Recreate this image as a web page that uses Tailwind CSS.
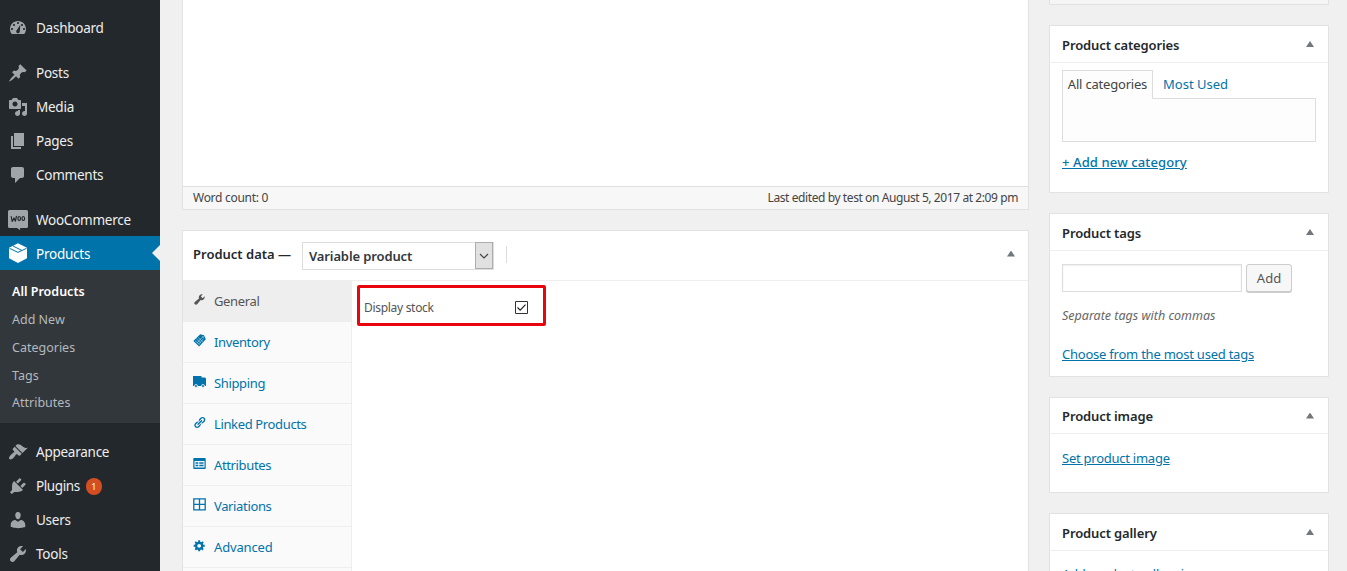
<!DOCTYPE html>
<html lang="en">
<head>
<meta charset="utf-8">
<title>Edit product</title>
<script src="https://cdn.jsdelivr.net/npm/@tailwindcss/browser@4"></script>
</head>
<body class="w-[1347px] h-[571px] overflow-hidden bg-[#f0f0f0] font-['Noto_Sans','Open_Sans',sans-serif] text-[13px] text-[#444] flex">

<!-- Admin menu -->
<nav class="w-[160px] h-[571px] shrink-0 bg-[#23282d] text-[#eee] text-[13.5px] tracking-[-0.25px] flex flex-col pt-[11px] overflow-hidden">
  <a class="h-[34px] mb-[11px] shrink-0 flex items-center gap-[8px] pl-2"><svg class="size-5 fill-[#a0a5aa]" viewBox="0 0 20 20"><path fill-rule="evenodd" d="M3.76 16h12.48c1.1-1.37 1.76-3.11 1.76-5 0-4.42-3.58-8-8-8s-8 3.58-8 8c0 1.89.66 3.63 1.76 5zM10 4c.55 0 1 .45 1 1s-.45 1-1 1-1-.45-1-1 .45-1 1-1zM6 6c.55 0 1 .45 1 1s-.45 1-1 1-1-.45-1-1 .45-1 1-1zM14 6c.55 0 1 .45 1 1s-.45 1-1 1-1-.45-1-1 .45-1 1-1zM4 10c.55 0 1 .45 1 1s-.45 1-1 1-1-.45-1-1 .45-1 1-1zM16 10c.55 0 1 .45 1 1s-.45 1-1 1-1-.45-1-1 .45-1 1-1zM12.300 6.800l-.5 6.700c0 1-.8 1.800-1.800 1.800s-1.800-.8-1.800-1.800c0-.6.300-1.100.700-1.400z"/></svg><span>Dashboard</span></a>
  <a class="h-[34px] shrink-0 flex items-center gap-[8px] pl-2"><svg class="size-5 fill-[#a0a5aa]" viewBox="0 0 20 20"><path d="M10.44 3.02l1.82-1.82 6.36 6.35-1.83 1.82c-1.05-.68-2.48-.57-3.41.36l-.75.75c-.92.93-1.04 2.35-.35 3.41l-1.83 1.82-2.41-2.41-2.8 2.79c-.42.42-3.38 2.71-3.8 2.29s1.86-3.39 2.28-3.81l2.79-2.79L4.1 9.36l1.83-1.82c1.05.69 2.48.57 3.4-.36l.75-.75c.93-.92 1.05-2.35.36-3.41z"/></svg><span>Posts</span></a>
  <a class="h-[34px] shrink-0 flex items-center gap-[8px] pl-2"><svg class="size-5 fill-[#a0a5aa]" viewBox="0 0 20 20"><path d="M13 11V4c0-.55-.45-1-1-1h-1.67L9 1H5L3.67 3H2c-.55 0-1 .45-1 1v7c0 .55.45 1 1 1h10c.55 0 1-.45 1-1zM7 4.5c1.38 0 2.5 1.12 2.5 2.5S8.38 9.5 7 9.5 4.5 8.38 4.5 7 5.62 4.5 7 4.5zM14 6h5v10.5c0 1.38-1.12 2.5-2.5 2.5S14 17.88 14 16.5s1.12-2.5 2.5-2.5c.17 0 .34.02.5.05V9h-3V6zm-4 8.05V13h2v3.5c0 1.38-1.12 2.5-2.5 2.5S7 17.88 7 16.5 8.12 14 9.5 14c.17 0 .34.02.5.05z" fill-rule="evenodd"/></svg><span>Media</span></a>
  <a class="h-[34px] shrink-0 flex items-center gap-[8px] pl-2"><svg class="size-5 fill-[#a0a5aa]" viewBox="0 0 20 20"><path d="M6 15V2h10v13H6zm-1 1h8v2H3V5h2v11z"/></svg><span>Pages</span></a>
  <a class="h-[34px] mb-[11px] shrink-0 flex items-center gap-[8px] pl-2"><svg class="size-5 fill-[#a0a5aa]" viewBox="0 0 20 20"><path d="M5 2h9c1.1 0 2 .9 2 2v7c0 1.1-.9 2-2 2h-2l-5 5v-5H5c-1.100 0-2-.9-2-2V4c0-1.100.9-2 2-2z"/></svg><span>Comments</span></a>
  <a class="h-[33px] shrink-0 flex items-center gap-[8px] pl-2"><svg class="size-5" viewBox="0 0 20 20"><path fill="#a0a5aa" d="M1.500 0h17A1.500 1.500 0 0 1 20 1.500v15a1.500 1.500 0 0 1-1.500 1.500H12l.3 2.200L9 18H1.500A1.500 1.500 0 0 1 0 16.500v-15A1.500 1.500 0 0 1 1.500 0z"/><g fill="none" stroke="#23282d" stroke-width="1.200" stroke-linecap="round" stroke-linejoin="round"><path d="M3.200 6.500l1 5 1.800-3.500 1.400 3.200 1-4.900"/><ellipse cx="11.200" cy="8.500" rx="1.300" ry="2"/><ellipse cx="15.300" cy="8.500" rx="1.300" ry="2"/></g></svg><span class="pt-[2px]">WooCommerce</span></a>
  <a class="h-[34px] shrink-0 flex items-center gap-[8px] pl-2 bg-[#0073aa] text-white"><svg class="size-5" viewBox="0 0 20 20"><path fill="#fff" d="M10 .2l9 4.600v10.400l-9 4.800-9-4.800V4.800z"/><path fill="none" stroke="#0073aa" stroke-width="1" d="M1.500 5.300L10 9.400l8.500-4.100M5 3l9 4.500"/></svg><span class="grow pt-[2px]">Products</span><i class="w-2 h-4 bg-[#f0f0f0] [clip-path:polygon(100%_0,0_50%,100%_100%)]"></i></a>
  <div class="h-[153px] mb-[12px] shrink-0 bg-[#32373c] text-[#b4b9be] text-[12.5px] tracking-normal pl-3 pt-[9px] flex flex-col">
    <a class="h-[27.700px] shrink-0 flex items-center font-semibold text-white">All Products</a>
    <a class="h-[27.700px] shrink-0 flex items-center">Add New</a>
    <a class="h-[27.700px] shrink-0 flex items-center">Categories</a>
    <a class="h-[27.700px] shrink-0 flex items-center">Tags</a>
    <a class="h-[27.700px] shrink-0 flex items-center">Attributes</a>
  </div>
  <a class="h-[34px] shrink-0 flex items-center gap-[8px] pl-2"><svg class="size-5 fill-[#a0a5aa]" viewBox="0 0 20 20"><path d="M14.48 11.06L7.41 3.99l1.5-1.5c.5-.56 2.3-.47 3.51.32 1.21.8 1.43 1.28 2.91 2.1 1.18.64 2.45 1.26 4.45.85zm-.71.71L6.7 4.7 4.93 6.47c-.39.39-.39 1.02 0 1.41l1.06 1.06c.39.39.39 1.03 0 1.42-.6.6-1.43 1.11-2.21 1.69-.35.26-.7.53-1.01.84C1.43 14.23.4 16.08 1.4 17.07c.99 1 2.84-.03 4.18-1.36.31-.31.58-.66.85-1.02.57-.78 1.08-1.61 1.69-2.21.39-.39 1.02-.39 1.41 0l1.06 1.06c.39.39 1.02.39 1.41 0z"/></svg><span>Appearance</span></a>
  <a class="h-[34px] shrink-0 flex items-center gap-[8px] pl-2"><svg class="size-5 fill-[#a0a5aa]" viewBox="0 0 20 20"><path d="M13.11 4.36L9.87 7.6 8 5.73l3.24-3.24c.35-.34 1.05-.2 1.56.32.52.51.66 1.21.31 1.55zm-8 1.77l.91-1.12 9.01 9.01-1.19.84c-.71.71-2.63 1.16-3.82 1.16H6.14L4.9 17.26c-.59.59-1.54.59-2.12 0-.59-.58-.59-1.53 0-2.12l1.24-1.24v-3.88c0-1.13.4-3.19 1.09-3.89zm7.26 3.97l3.24-3.24c.34-.35 1.04-.21 1.55.31.52.51.66 1.21.31 1.55l-3.24 3.25z"/></svg><span class="tracking-[-0.4px]">Plugins</span><span class="-ml-[2px] w-4 h-[17px] rounded-full bg-[#d54e21] text-white text-[9px] leading-[17px] text-center">1</span></a>
  <a class="h-[34px] shrink-0 flex items-center gap-[8px] pl-2"><svg class="size-5 fill-[#a0a5aa]" viewBox="0 0 20 20"><path d="M10 9.25c-2.27 0-2.73-3.44-2.73-3.44C7 4.02 7.82 2 9.97 2c2.16 0 2.98 2.02 2.71 3.81 0 0-.41 3.44-2.68 3.44zm0 2.57L12.72 10c2.39 0 4.52 2.33 4.52 4.53v2.49s-3.65 1.13-7.24 1.13c-3.65 0-7.24-1.13-7.24-1.13v-2.49c0-2.25 1.94-4.48 4.47-4.48z"/></svg><span>Users</span></a>
  <a class="h-[34px] shrink-0 flex items-center gap-[8px] pl-2"><svg class="size-5 fill-[#a0a5aa]" viewBox="0 0 20 20"><path d="M16.68 9.77c-1.34 1.34-3.3 1.67-4.95.99l-5.41 6.52c-.99.99-2.59.99-3.58 0s-.99-2.59 0-3.57l6.52-5.42c-.68-1.65-.35-3.61.99-4.95 1.28-1.28 3.12-1.62 4.72-1.06l-2.89 2.89 2.82 2.82 2.86-2.87c.53 1.58.18 3.39-1.08 4.65z"/></svg><span>Tools</span></a>
</nav>

<!-- Main column -->
<main class="ml-[22px] w-[847px] h-[571px] overflow-hidden shrink-0 flex flex-col">
  <section class="h-[210px] shrink-0 bg-white border border-t-0 border-[#e2e2e2] flex flex-col">
    <div class="grow"></div>
    <div class="h-[23px] bg-[#f7f7f7] border-t border-[#dedede] px-[10px] flex items-center justify-between text-[12px]"><span class="tracking-[-0.28px]">Word count: 0</span><span class="tracking-[-0.41px]">Last edited by test on August 5, 2017 at 2:09 pm</span></div>
  </section>
  <section class="mt-[20px] h-[400px] shrink-0 bg-white border border-[#e2e2e2] flex flex-col">
    <header class="h-[50px] shrink-0 border-b border-[#eee] pl-[10px] pr-[13px] flex items-center text-[#23282d] font-semibold">
      <h2 class="w-[109px] -mt-[2px] whitespace-nowrap">Product data —</h2>
      <div class="w-[192px] h-[28px] border border-[#ddd] flex justify-between items-center pl-[6px]"><span class="text-[#32373c] tracking-[-0.12px] pt-[3px]">Variable product</span><span class="w-[18px] h-[27px] border border-[#adadad] bg-[#e1e1e1] flex items-center justify-center"><svg class="w-[10px] h-[6px]" viewBox="0 0 10 6"><path d="M1 1l4 4 4-4" fill="none" stroke="#444" stroke-width="1.200"/></svg></span></div>
      <i class="ml-[12px] -mt-[2px] w-px h-[17px] bg-[#ddd] mr-auto"></i>
      <i class="w-[8px] h-[6px] -mt-[4px] bg-[#72777c] [clip-path:polygon(50%_0,100%_100%,0_100%)]"></i>
    </header>
    <div class="grow flex">
      <ul class="w-[169px] shrink-0 border-r border-[#eee] bg-[#fafafa] text-[#0073aa] tracking-[-0.36px]">
        <li class="h-[41px] border-b border-[#eee] bg-[#eee] text-[#555] flex items-center gap-[8px] pl-[10px]"><svg class="size-[13px] -mt-[4px] fill-current" viewBox="0 0 20 20"><path d="M16.68 9.77c-1.34 1.34-3.3 1.67-4.95.99l-5.41 6.52c-.99.99-2.59.99-3.58 0s-.99-2.59 0-3.57l6.52-5.42c-.68-1.65-.35-3.61.99-4.95 1.28-1.28 3.12-1.62 4.72-1.06l-2.89 2.89 2.82 2.82 2.86-2.87c.53 1.58.18 3.39-1.08 4.65z"/></svg><span class="pt-[2px]">General</span></li>
        <li class="h-[41px] border-b border-[#eee] flex items-center gap-[8px] pl-[10px]"><svg class="size-[13px] -mt-[4px]" viewBox="0 0 13 13"><path fill="currentColor" d="M7.200.3L11 1.300l1.800 3.900-6.600 7.300L.3 7z"/><g fill="none" stroke="#fafafa" stroke-width=".45"><path d="M2 6.600l4.700 4.200M3.500 5l4.700 4.200M5 3.500l4.700 4.200M4 9l5-5.600M5.600 10.200l5-5.600"/></g><circle cx="10" cy="2.900" r=".7" fill="#fafafa"/></svg><span class="pt-[2px]">Inventory</span></li>
        <li class="h-[41px] border-b border-[#eee] flex items-center gap-[8px] pl-[10px]"><svg class="size-[13px] -mt-[4px]" viewBox="0 0 13 13"><path fill="currentColor" d="M0 1h8.500v1.500H12l1 1v7.500H0z"/><g fill="currentColor" stroke="#fafafa" stroke-width=".8"><circle cx="3" cy="11" r="1.500"/><circle cx="10" cy="11" r="1.500"/></g></svg><span class="pt-[2px]">Shipping</span></li>
        <li class="h-[41px] border-b border-[#eee] flex items-center gap-[8px] pl-[10px]"><svg class="size-[13px] -mt-[4px] fill-current" viewBox="0 0 20 20"><path d="M17.74 2.76c1.68 1.69 1.68 4.41 0 6.1l-1.53 1.52c-1.12 1.12-2.7 1.47-4.14 1.09l2.62-2.61.76-.77.76-.76c.84-.84.84-2.2 0-3.04-.84-.85-2.2-.85-3.04 0l-.77.76-3.38 3.38c-.37-1.44-.02-3.02 1.1-4.14l1.52-1.53c1.69-1.68 4.42-1.68 6.1 0zM8.59 13.43l5.34-5.34c.42-.42.42-1.1 0-1.52-.44-.43-1.13-.39-1.53 0l-5.33 5.34c-.42.42-.42 1.1 0 1.52.44.43 1.13.39 1.52 0zm-.76 2.29l4.14-4.15c.38 1.44.03 3.02-1.09 4.14l-1.52 1.53c-1.69 1.68-4.41 1.68-6.1 0-1.68-1.68-1.68-4.42 0-6.1l1.53-1.52c1.12-1.12 2.7-1.47 4.14-1.1l-4.14 4.15c-.85.84-.85 2.2 0 3.05.84.84 2.2.84 3.04 0z"/></svg><span class="pt-[2px]">Linked Products</span></li>
        <li class="h-[41px] border-b border-[#eee] flex items-center gap-[8px] pl-[10px]"><svg class="size-[13px] -mt-[4px]" viewBox="0 0 13 13"><path fill="currentColor" fill-rule="evenodd" d="M1 1h11a.7.7 0 0 1 .7.7v9.600a.7.7 0 0 1-.7.7H1a.7.7 0 0 1-.7-.7V1.700A.7.7 0 0 1 1 1zM1.500 4v6.500h10V4zM2.500 5.200h2.800v1.500H2.500zM2.500 7.800h2.800v1.500H2.500zM6.300 5.200h4.200v1.500H6.300zM6.300 7.800h4.200v1.500H6.300z"/></svg><span class="pt-[2px]">Attributes</span></li>
        <li class="h-[41px] border-b border-[#eee] flex items-center gap-[8px] pl-[10px]"><svg class="size-[13px] -mt-[4px]" viewBox="0 0 13 13"><path fill="none" stroke="currentColor" stroke-width="1.300" d="M.8.8h11.400v11H.8zM6.500 1v10.500M1 6.300h11"/></svg><span class="pt-[2px]">Variations</span></li>
        <li class="h-[41px] border-b border-[#eee] flex items-center gap-[8px] pl-[10px]"><svg class="size-[13px] -mt-[4px] fill-current" viewBox="0 0 20 20"><path fill-rule="evenodd" d="M18 12h-2.18c-.17.7-.44 1.35-.81 1.93l1.54 1.54-2.1 2.1-1.54-1.54c-.58.36-1.23.63-1.91.79V19H8v-2.18c-.68-.16-1.33-.43-1.91-.79l-1.54 1.54-2.12-2.12 1.54-1.54c-.36-.58-.63-1.23-.79-1.91H1V9.03h2.17c.16-.7.44-1.35.8-1.94L2.43 5.55l2.1-2.1 1.54 1.54c.58-.37 1.24-.64 1.93-.81V2h3v2.18c.68.16 1.33.43 1.91.79l1.54-1.54 2.12 2.12-1.54 1.54c.36.59.64 1.24.8 1.94H18V12zm-8.500 1.500c1.660 0 3-1.340 3-3s-1.340-3-3-3-3 1.340-3 3 1.340 3 3 3z"/></svg><span class="pt-[2px] tracking-[-0.15px]">Advanced</span></li>
      </ul>
      <div class="ml-[5px] mt-[4px] w-[189px] h-[41px] border-[3px] border-[#e8050e] rounded-[2px] flex items-center justify-between pl-[4px] pr-[15px] text-[12px] text-[#555]"><span class="tracking-[-0.3px] mt-[5px]">Display stock</span><svg class="size-[13px] mt-[3px]" viewBox="0 0 13 13"><path d="M.5.5h12v12H.5z" fill="#fff" stroke="#333"/><path d="M2.500 6.500l2.700 2.700 5.300-5.500" fill="none" stroke="#222" stroke-width="1.200"/></svg></div>
    </div>
  </section>
</main>

<!-- Side column -->
<aside class="ml-[20px] w-[280px] h-[571px] overflow-hidden shrink-0 flex flex-col">
  <div class="h-[5px] shrink-0 bg-[#f5f5f5] border border-t-0 border-[#e2e2e2]"></div>
  <section class="mt-[20px] h-[168px] shrink-0 bg-white border border-[#e2e2e2]">
    <header class="h-[37px] border-b border-[#eee] pl-[12px] pr-[14px] flex items-center justify-between text-[#23282d] font-semibold tracking-[-0.12px]"><h2 class="mt-[3px]">Product categories</h2><i class="w-[8px] h-[6px] bg-[#72777c] [clip-path:polygon(50%_0,100%_100%,0_100%)]"></i></header>
    <div class="px-[12px] pt-[7px]">
      <div class="flex h-[29px] -mb-px"><span class="w-[91px] border border-b-0 border-[#ddd] bg-[#fdfdfd] relative z-10 flex items-center justify-center tracking-[-0.2px]">All categories</span><span class="ml-[10px] flex items-center text-[#0073aa]">Most Used</span></div>
      <div class="w-[254px] h-[44px] border border-[#ddd] bg-[#fdfdfd]"></div>
      <a class="block mt-[11px] font-medium tracking-[0.12px] text-[#0073aa] underline">+ Add new category</a>
    </div>
  </section>
  <section class="mt-[20px] h-[164px] shrink-0 bg-white border border-[#e2e2e2]">
    <header class="h-[37px] border-b border-[#eee] pl-[12px] pr-[14px] flex items-center justify-between text-[#23282d] font-semibold tracking-[-0.12px]"><h2 class="mt-[3px]">Product tags</h2><i class="w-[8px] h-[6px] bg-[#72777c] [clip-path:polygon(50%_0,100%_100%,0_100%)]"></i></header>
    <div class="px-[12px] pt-[13px]">
      <div class="flex gap-[4px]"><span class="w-[180px] h-[28px] border border-[#ddd] bg-white shadow-[inset_0_1px_2px_rgba(0,0,0,0.07)]"></span><span class="w-[46px] h-[28px] pt-[2px] border border-[#ccc] rounded-[3px] bg-[#f7f7f7] shadow-[0_1px_0_#ccc] flex items-center justify-center text-[#555]">Add</span></div>
      <p class="mt-[14px] italic text-[12.500px] leading-[20px] text-[#666]">Separate tags with commas</p>
      <a class="block mt-[18px] leading-[20px] tracking-[-0.23px] text-[#0073aa] underline">Choose from the most used tags</a>
    </div>
  </section>
  <section class="mt-[20px] h-[96px] shrink-0 bg-white border border-[#e2e2e2]">
    <header class="h-[36px] border-b border-[#eee] pl-[12px] pr-[14px] flex items-center justify-between text-[#23282d] font-semibold tracking-[-0.12px]"><h2 class="mt-[3px]">Product image</h2><i class="w-[8px] h-[6px] bg-[#72777c] [clip-path:polygon(50%_0,100%_100%,0_100%)]"></i></header>
    <a class="block pl-[12px] pt-[14px] leading-[20px] tracking-[-0.25px] text-[#0073aa] underline">Set product image</a>
  </section>
  <section class="mt-[20px] h-[96px] shrink-0 bg-white border border-[#e2e2e2]">
    <header class="h-[37px] border-b border-[#eee] pl-[12px] pr-[14px] flex items-center justify-between text-[#23282d] font-semibold tracking-[-0.12px]"><h2 class="mt-[3px]">Product gallery</h2><i class="w-[8px] h-[6px] bg-[#72777c] [clip-path:polygon(50%_0,100%_100%,0_100%)]"></i></header>
    <a class="block pl-[12px] pt-[13px] leading-[20px] tracking-[-0.25px] text-[#0073aa] underline">Add product gallery images</a>
  </section>
</aside>
</body>
</html>
